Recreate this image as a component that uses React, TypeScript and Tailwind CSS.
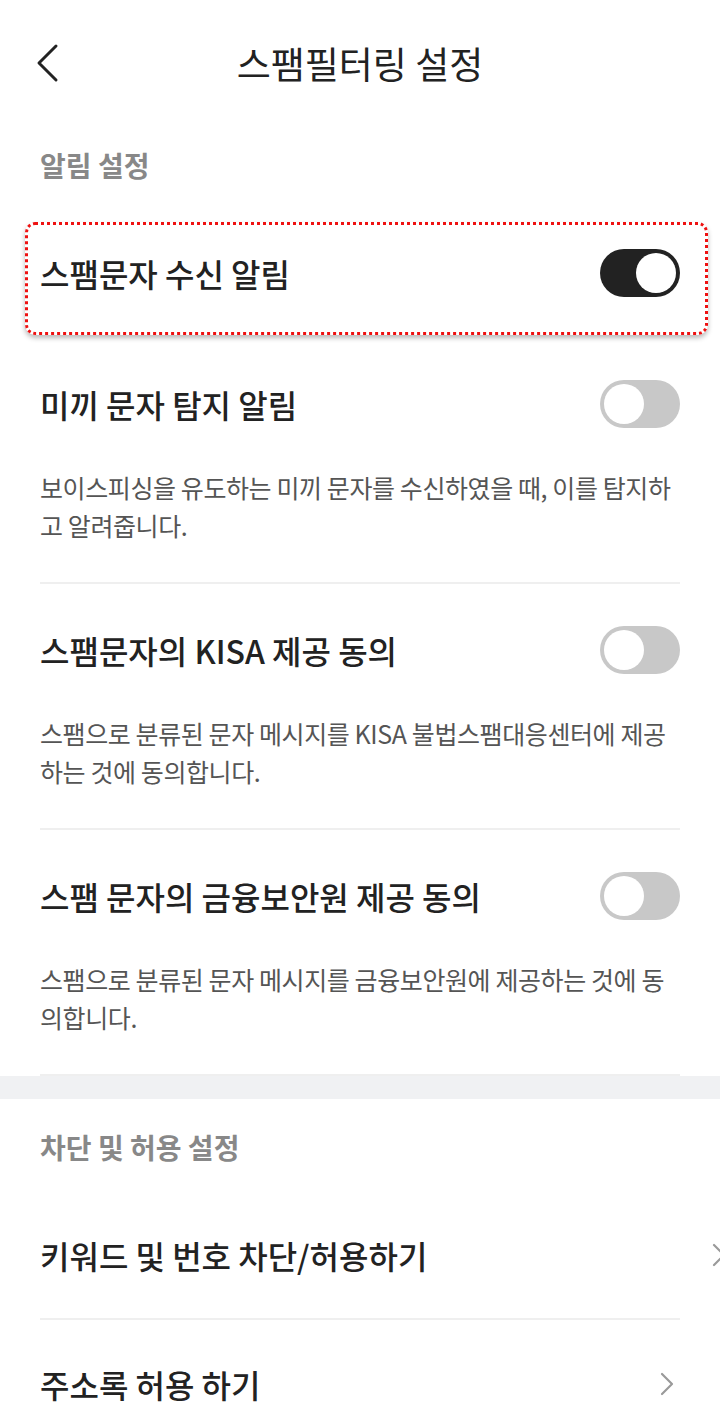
import React from "react";

type ToggleProps = { on?: boolean };

const Toggle: React.FC<ToggleProps> = ({ on = false }) => (
  <div
    className={`w-[80px] h-[48px] rounded-full p-[4px] flex shrink-0 ${
      on ? "bg-[#222222] justify-end" : "bg-[#c8c8c8] justify-start"
    }`}
  >
    <div className="w-[40px] h-[40px] rounded-full bg-white" />
  </div>
);

const Chevron: React.FC<{ className?: string }> = ({ className = "" }) => (
  <svg width="14" height="24" viewBox="0 0 14 24" className={className}>
    <path d="M2 2 L12 12 L2 22" fill="none" stroke="#9a9a9a" strokeWidth="2.2" strokeLinecap="round" strokeLinejoin="round" />
  </svg>
);

const SectionLabel: React.FC<{ text: string; top: string; bottom: string }> = ({ text, top, bottom }) => (
  <div className={`px-10 ${top} ${bottom} text-[28px] leading-[36px] font-bold text-[#888888]`}>{text}</div>
);

const ToggleRow: React.FC<{ title: string; desc: string }> = ({ title, desc }) => (
  <div className="px-10">
    <div className="pt-[42px] pb-[38px] border-b-2 border-[#efefef]">
      <div className="flex items-center justify-between h-12">
        <span className="text-[32px] leading-[48px] font-medium text-[#222222]">{title}</span>
        <Toggle />
      </div>
      <p className="mt-10 text-[25px] leading-[38px] tracking-[-0.4px] text-[#555555]">{desc}</p>
    </div>
  </div>
);

export default function App() {
  return (
    <div className="w-[720px] min-h-[1427px] bg-white overflow-hidden font-['Noto_Sans_CJK_KR','Noto_Sans',sans-serif]">
      {/* header */}
      <div className="h-[126px] grid grid-cols-[1fr_auto_1fr] items-center">
        <div className="pl-[35px] flex items-center">
          <svg width="24" height="40" viewBox="0 0 24 40">
            <path d="M21 3 L4 20 L21 37" fill="none" stroke="#222222" strokeWidth="3" strokeLinecap="round" strokeLinejoin="round" />
          </svg>
        </div>
        <h1 className="text-[37px] leading-[48px] font-normal text-[#222222]">스팸필터링 설정</h1>
        <div />
      </div>

      <SectionLabel text="알림 설정" top="pt-[21px]" bottom="pb-[24px]" />

      {/* highlighted row */}
      <div className="relative px-10 pt-[42px] pb-[41px]">
        <div className="flex items-center justify-between h-12">
          <span className="text-[32px] leading-[48px] font-medium text-[#222222]">스팸문자 수신 알림</span>
          <Toggle on />
        </div>
        <div className="absolute left-[25px] right-[12px] top-[15px] bottom-[3px] rounded-[10px] border-[3px] border-dotted border-[#ee1111] shadow-[0_3px_5px_rgba(0,0,0,0.28)] pointer-events-none" />
      </div>

      <ToggleRow
        title="미끼 문자 탐지 알림"
        desc="보이스피싱을 유도하는 미끼 문자를 수신하였을 때, 이를 탐지하고 알려줍니다."
      />
      <ToggleRow
        title="스팸문자의 KISA 제공 동의"
        desc="스팸으로 분류된 문자 메시지를 KISA 불법스팸대응센터에 제공하는 것에 동의합니다."
      />
      <ToggleRow
        title="스팸 문자의 금융보안원 제공 동의"
        desc="스팸으로 분류된 문자 메시지를 금융보안원에 제공하는 것에 동의합니다."
      />

      <div className="h-[23px] bg-[#f0f1f3]" />

      <SectionLabel text="차단 및 허용 설정" top="pt-[30px]" bottom="pb-[27px]" />

      <div className="px-10">
        <div className="h-[128px] flex items-center justify-between border-b-2 border-[#efefef]">
          <span className="text-[32px] leading-[48px] font-medium text-[#222222]">키워드 및 번호 차단/허용하기</span>
          <Chevron className="-mr-[46px]" />
        </div>
        <div className="h-[128px] flex items-center justify-between">
          <span className="text-[32px] leading-[48px] font-medium text-[#222222]">주소록 허용 하기</span>
          <Chevron className="mr-[6px]" />
        </div>
      </div>
    </div>
  );
}
